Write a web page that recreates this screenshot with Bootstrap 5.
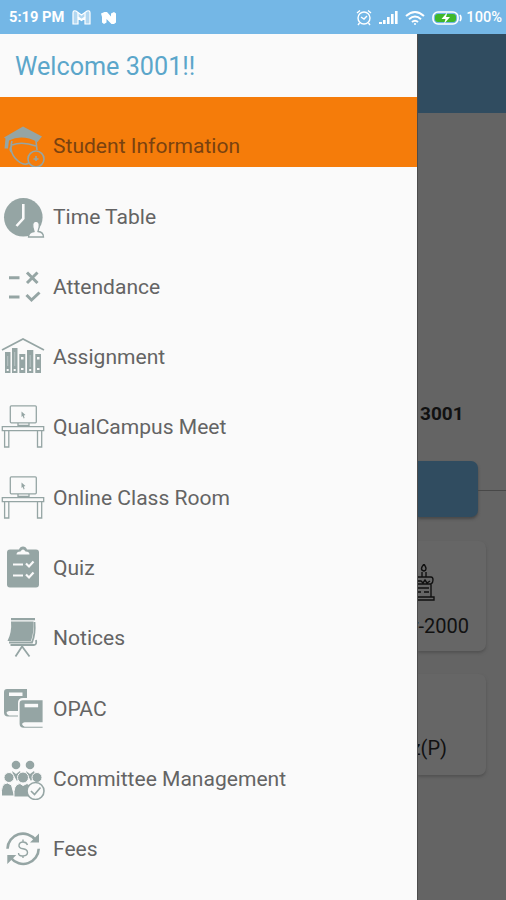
<!DOCTYPE html>
<html lang="en">
<head>
<meta charset="utf-8">
<meta name="viewport" content="width=device-width, initial-scale=1">
<title>QualCampus</title>
<link href="https://cdn.jsdelivr.net/npm/bootstrap@5.3.0/dist/css/bootstrap.min.css" rel="stylesheet">
<style>
body{font-family:Roboto,"Noto Sans",sans-serif;background:#646464;color:#111;height:900px;overflow:hidden}
.status{height:34px;background:#74b7e6;color:#fff;font-weight:700;font-size:14.7px;line-height:35px;padding:1px 4px 0 9px}
.status svg{display:block}
.pct{font-weight:500;font-size:14.6px}
.n-mark{margin-left:9px}
.sys{gap:7px}
.screen{height:866px}
.drawer{width:417px;background:#fafafa}
.welcome{height:63px;padding:3px 0 0 15px;font-size:25.2px;color:#5ba6ca}
.entry{height:70.3px;padding-right:10px;color:#646464;font-size:21.05px;line-height:42px}
.entry svg{width:46px;height:46px;margin-right:7px;flex:none;color:#95a5a4}
.entry.current{background:#f57c0a;color:#7a4210}
.behind{width:89px;border-left:1px solid #4c4c4c}
.appbar{height:79px;background:#304c60}
.idno{font-weight:700;font-size:19px;line-height:24px;margin-top:289px;padding-left:2px}
.tab-row{margin-top:35px}
.rule{height:1px;background:#484848;margin-top:3px}
.tab-btn{width:60px;height:56px;background:#304c60;border-radius:0 7px 7px 0;box-shadow:0 2px 3px #484848}
.tile{width:68px;background:#666;border-radius:0 7px 7px 0;box-shadow:0 2px 3px #525252;font-size:20px;line-height:24px;white-space:nowrap}
.t1{height:110px;margin-top:24px;padding:23px 17px 0 0}
.t2{height:101px;margin-top:23px;padding:62px 39px 0 0}
</style>
<script src="https://cdn.jsdelivr.net/npm/bootstrap@5.3.0/dist/js/bootstrap.bundle.min.js"></script>
</head>
<body>
<svg class="d-none">
<symbol id="desk" viewBox="0 0 46 46"><g fill="none" stroke="currentColor" stroke-width="1.3"><rect x="10.3" y="3.8" width="26" height="17" rx="1"/><path d="M18 21v2.500h11V21M2.300 24.600h41.400v4H2.300zM4.600 28.600V45h4.200V28.600M37.500 28.600V45h4.200V28.600"/></g><path d="M21.500 9.500l4 3.500-1.700.4.800 2.500-1 .5-.8-2.500-1.300 1.200z" fill="currentColor"/></symbol>
</svg>
<header class="status d-flex align-items-center justify-content-between">
  <div class="d-flex align-items-center">
    <span>5:19 PM</span>
    <svg class="ms-2" width="19" height="15" viewBox="0 0 19 15"><path d="M1 3Q1 0 4 1l5.500 4L15 1q3-1 3 2v11h-5V8L9.500 10.500 6 8v6H1z" fill="#fff" fill-opacity=".45" stroke="#fff" stroke-width="1.200"/><path d="M6 3v4l3.500 2.500L13 7V3" fill="none" stroke="#fff" stroke-width="1.200"/></svg>
    <svg class="n-mark" width="17" height="14" viewBox="0 0 17 14" fill="#fff"><path d="M1 2.500L4.500 1H7l4 4.500V2.500L14 1l2 1.500v9L14 13h-2.500L6.500 8v3.500L4 13l-2-1.500V6z"/></svg>
  </div>
  <div class="sys d-flex align-items-center">
    <svg width="16" height="17" viewBox="0 0 16 17" fill="none" stroke="#fff" stroke-width="1.4"><circle cx="8" cy="9" r="6"/><path d="M1 4l3-2.500M15 4l-3-2.500M5 8l3 2 3-3M3.500 14L2 16M12.500 14l1.500 2"/></svg>
    <svg width="19" height="15" viewBox="0 0 19 15" fill="#fff"><path d="M0 12h3v2H0zM4 10h2.600v4H4zM8 7h2.600v7H8zM12 4h2.600v10H12zM16 1h2.600v13H16z"/></svg>
    <svg width="20" height="16" viewBox="0 0 20 16" fill="none" stroke="#fff" stroke-width="2"><path d="M1 6q9-8 18 0M4 9.200q6-5.400 12 0M7 12q3-2.600 6 0"/><circle cx="10" cy="14" r="1" fill="#fff" stroke="none"/></svg>
    <svg width="30" height="14" viewBox="0 0 30 14"><rect x="1" y="1" width="25" height="12" rx="5" fill="#74b7e6" stroke="#fff" stroke-width="1.600"/><rect x="3" y="3" width="21" height="8" rx="3" fill="#3fb82a"/><path d="M28 4q2 3 0 6" fill="none" stroke="#fff" stroke-width="1.600"/><path d="M15.500 1l-6 7h4l-1.500 5 6-7h-4z" fill="#fff"/></svg>
    <span class="pct" style="margin-left:-3px">100%</span>
  </div>
</header>
<div class="screen d-flex">
  <nav class="drawer flex-shrink-0">
    <div class="welcome d-flex align-items-center">Welcome 3001!!</div>
    <div class="entry current d-flex align-items-end"><svg viewBox="0 0 46 46" fill="none" stroke="currentColor" stroke-width="1.600"><path d="M4 16.500L23 5.500l19 10-4.500 5.500Q22 13 9 19.500l-1 8H4.500l1-10z" fill="currentColor" stroke="none"/><path d="M12 24q10-4 24 1M12 20q-3 10 3 17 8 9 14 5M36 20l1 9M12 25q-3 2-1 6"/><circle cx="36" cy="38" r="8"/><path d="M36 35v5M33.500 38h5"/></svg><span>Student Information</span></div>
    <div class="entry d-flex align-items-end"><svg viewBox="0 0 46 46"><circle cx="23.300" cy="25.300" r="19.300" fill="currentColor"/><path d="M23.300 12v14.500L16.500 34" fill="none" stroke="#fafafa" stroke-width="2.600"/><path d="M28.500 45q0-5 5.500-5.500-3.500-10 2-10.500 5.500.5 2 10.500 5.500.5 5.500 5.500z" fill="#fafafa" stroke="currentColor" stroke-width="1.300"/></svg><span>Time Table</span></div>
    <div class="entry d-flex align-items-end"><svg viewBox="0 0 46 46" fill="none" stroke="currentColor" stroke-width="3"><path d="M9 15.800h10.500M9 35h10.500M27 10.500l10.500 10.500M37.500 10.500L27 21M26.500 33l5 5 8-7.500"/></svg><span>Attendance</span></div>
    <div class="entry d-flex align-items-end"><svg viewBox="0 0 46 46"><path d="M2 18L23 7l21 11" fill="none" stroke="currentColor" stroke-width="1.700"/><path d="M5 20h5.500v21H5zM12 16h5.500v25H12zM19.300 22h6v19h-6zM27 18h6.300v23H27zM35.300 22H41v19h-5.700z" fill="currentColor"/><path d="M7.700 24v10M14.700 20v14M30.200 23v12" stroke="#b9c4c4"/><path d="M21 25h2.500v2.500H21zM37 25h2.500v2.500H37zM21 36h2.500v2H21zM37 36h2.500v2H37zM6.700 37h2v2h-2zM13.700 37h2v2h-2zM29.200 37h2v2h-2z" fill="#fafafa"/></svg><span>Assignment</span></div>
    <div class="entry d-flex align-items-end"><svg><use href="#desk"/></svg><span>QualCampus Meet</span></div>
    <div class="entry d-flex align-items-end"><svg><use href="#desk"/></svg><span>Online Class Room</span></div>
    <div class="entry d-flex align-items-end"><svg viewBox="0 0 46 46"><path d="M10 6.500h9q1-3 4-3t4 3h9q3 0 3 3v32q0 3-3 3H10q-3 0-3-3v-32q0-3 3-3z" fill="currentColor"/><path d="M16.500 11.500q0-3 4-3 2.500-4 5 0 4 0 4 3z" fill="#fafafa"/><path d="M13 21.500h10M13 32.500h10M26 20.500l3 3 4.500-5M26 31.500l3 3 4.500-5" fill="none" stroke="#fafafa" stroke-width="2.200"/></svg><span>Quiz</span></div>
    <div class="entry d-flex align-items-end"><svg viewBox="0 0 46 46"><path d="M11 5h24v2.200H11zM11 8.500h22.500q.5 11-2.500 19.500H7.500Q12 19 11 8.500z" fill="currentColor"/><path d="M34.500 9q1 12-2.500 20.500H9M36 27q1 5-2 5H10.500M23 32L15.500 43.500M22.500 34l7 9.500" fill="none" stroke="currentColor" stroke-width="1.800"/></svg><span>Notices</span></div>
    <div class="entry d-flex align-items-end"><svg viewBox="0 0 46 46"><g id="tome"><path d="M7 5h20v22H9q-5 1 0 4.500h18v1H8q-4 0-4-4V8q0-3 3-3z" fill="currentColor"/><path d="M9 8.500h13.500V12H9z" fill="#fafafa"/><path d="M8 28.500h19v2H8q-2-1 0-2z" fill="#fafafa"/></g><path d="M18 45V19q0-5 5-5h22v31z" fill="#fafafa"/><use href="#tome" x="15.600" y="11.300"/></svg><span>OPAC</span></div>
    <div class="entry d-flex align-items-end"><svg viewBox="0 0 46 46" fill="currentColor"><circle cx="16" cy="11" r="4.300"/><circle cx="30" cy="11" r="4.300"/><path d="M12 17l4 3 4-3 1 3-4 7-4-7zM26 17l4 3 4-3 1 3-4 7-4-7z"/><g stroke="#fafafa"><circle cx="9" cy="23.500" r="5"/><circle cx="37" cy="23.500" r="5"/><path d="M1.500 42q-1-13 6-13l4 2 3 11zM31 35l2-6 4 2 4-2 2 6z"/><circle cx="23" cy="23.500" r="5.500"/><path d="M14 43q-1-13 6-13.500l3 2 4-2q5 1 6 13.500z"/></g><circle cx="35.500" cy="37" r="8.500" fill="#fafafa" stroke="currentColor" stroke-width="1.600"/><path d="M31 37l3.500 3.500 6-7" fill="none" stroke="currentColor" stroke-width="1.700"/></svg><span>Committee Management</span></div>
    <div class="entry d-flex align-items-end"><svg viewBox="0 0 46 46" fill="none" stroke="currentColor" stroke-width="2.600"><path d="M7.500 24.700A15.500 15.500 0 0 1 35.500 16M38.700 24.700A15.500 15.500 0 0 1 11 34"/><path d="M39 9.500v9h-9zM7.300 40v-9h9z" fill="currentColor" stroke="none"/><path d="M27.500 21q-1-3-4.500-3t-4 3 4 3.700 4.500 3.800-4.500 3.500-4.500-3M23 15.500V18M23 32v2" stroke-width="1.400"/></svg><span>Fees</span></div>
  </nav>
  <main class="behind overflow-hidden flex-shrink-0">
    <div class="appbar"></div>
    <div class="idno">3001</div>
    <div class="tab-row d-flex align-items-center"><div class="tab-btn"></div><div class="rule flex-fill"></div></div>
    <div class="tile t1 d-flex flex-column align-items-end">
      <svg class="me-auto flex-shrink-0" width="18" height="38" viewBox="0 0 18 38" fill="none" stroke="#111" stroke-width="1.400"><path d="M6 0Q1 6 6 7q4-1 0-7zM4 8v5M8 8v5M0 13h13q2 0 2 3t-2 4H0M13 20v13M0 33h16v3H0M0 17h3l2 2 2-3 2 3 3-2M0 24h11M0 28h3M6 28h5"/></svg>
      <span class="mt-2 pt-1">Apr-2000</span>
    </div>
    <div class="tile t2 d-flex flex-column align-items-end"><span>Quiz(P)</span></div>
  </main>
</div>
</body>
</html>
